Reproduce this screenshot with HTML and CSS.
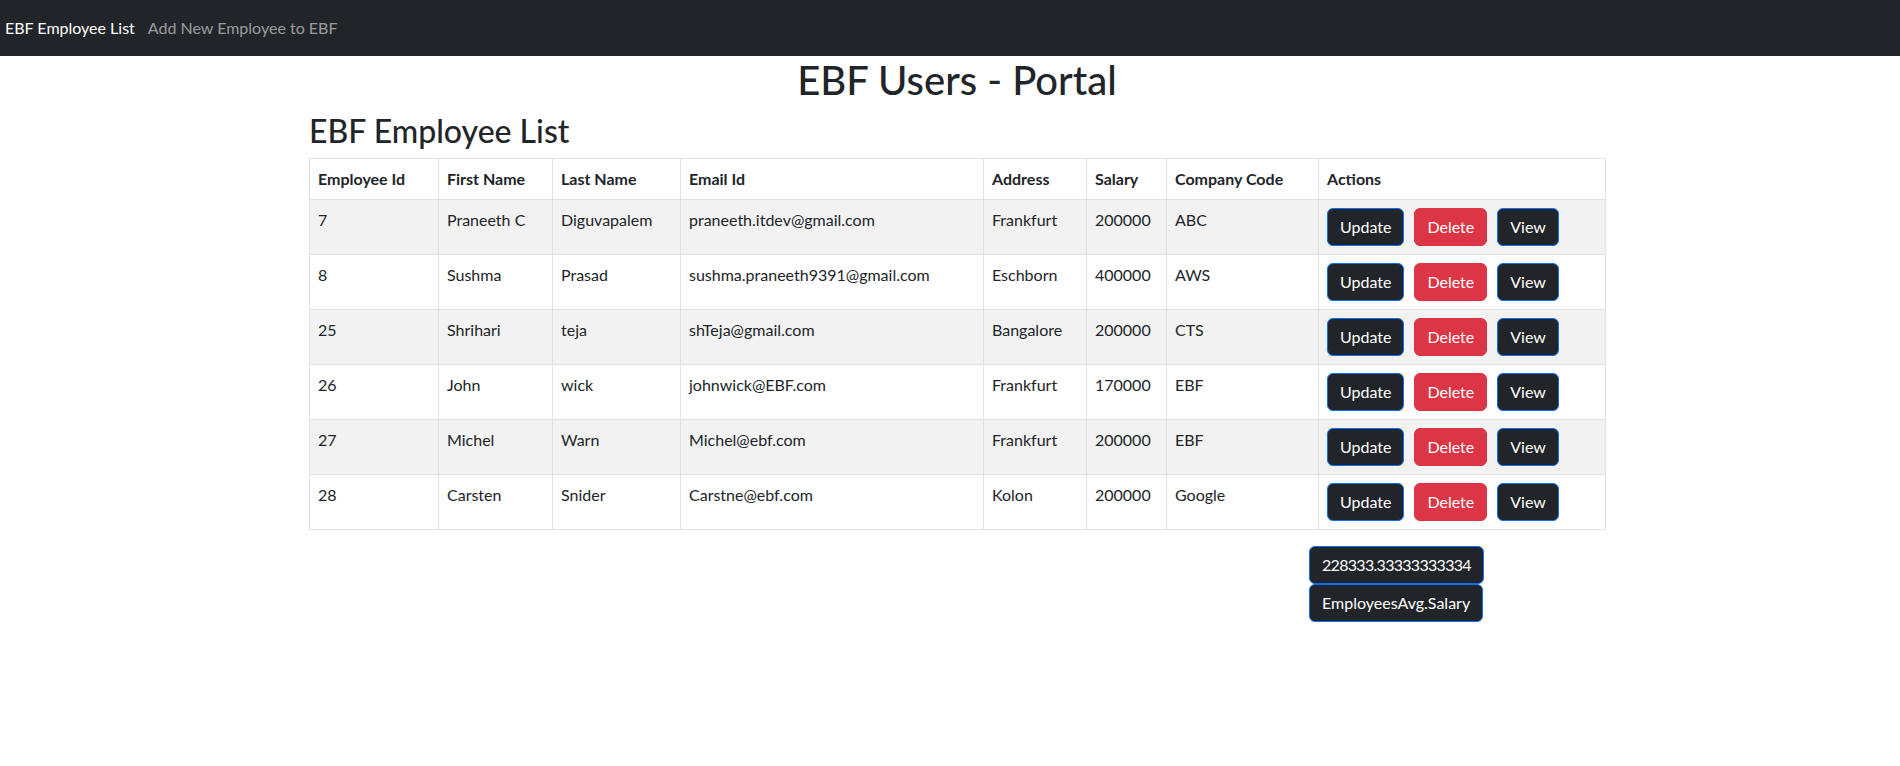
FILE: index.html
```html
<!DOCTYPE html>
<html lang="en">
<head>
<meta charset="utf-8">
<title>EBF Users - Portal</title>
<link rel="stylesheet" href="styles.css">
</head>
<body>
<nav class="navbar">
  <a class="nav-link brand" href="#">EBF Employee List</a>
  <a class="nav-link muted" href="#">Add New Employee to EBF</a>
</nav>
<main class="container">
  <h1 class="page-title">EBF Users - Portal</h1>
  <h2 class="list-title">EBF Employee List</h2>
  <table class="emp-table">
    <colgroup>
      <col class="w-id"><col class="w-first"><col class="w-last"><col class="w-email">
      <col class="w-addr"><col class="w-sal"><col class="w-code"><col class="w-act">
    </colgroup>
    <thead>
      <tr><th>Employee Id</th><th>First Name</th><th>Last Name</th><th>Email Id</th><th>Address</th><th>Salary</th><th>Company Code</th><th>Actions</th></tr>
    </thead>
    <tbody>
      <tr><td>7</td><td>Praneeth C</td><td>Diguvapalem</td><td>praneeth.itdev@gmail.com</td><td>Frankfurt</td><td>200000</td><td>ABC</td>
        <td><button class="btn btn-dark">Update</button><button class="btn btn-danger">Delete</button><button class="btn btn-dark">View</button></td></tr>
      <tr><td>8</td><td>Sushma</td><td>Prasad</td><td>sushma.praneeth9391@gmail.com</td><td>Eschborn</td><td>400000</td><td>AWS</td>
        <td><button class="btn btn-dark">Update</button><button class="btn btn-danger">Delete</button><button class="btn btn-dark">View</button></td></tr>
      <tr><td>25</td><td>Shrihari</td><td>teja</td><td>shTeja@gmail.com</td><td>Bangalore</td><td>200000</td><td>CTS</td>
        <td><button class="btn btn-dark">Update</button><button class="btn btn-danger">Delete</button><button class="btn btn-dark">View</button></td></tr>
      <tr><td>26</td><td>John</td><td>wick</td><td>johnwick@EBF.com</td><td>Frankfurt</td><td>170000</td><td>EBF</td>
        <td><button class="btn btn-dark">Update</button><button class="btn btn-danger">Delete</button><button class="btn btn-dark">View</button></td></tr>
      <tr><td>27</td><td>Michel</td><td>Warn</td><td>Michel@ebf.com</td><td>Frankfurt</td><td>200000</td><td>EBF</td>
        <td><button class="btn btn-dark">Update</button><button class="btn btn-danger">Delete</button><button class="btn btn-dark">View</button></td></tr>
      <tr><td>28</td><td>Carsten</td><td>Snider</td><td>Carstne@ebf.com</td><td>Kolon</td><td>200000</td><td>Google</td>
        <td><button class="btn btn-dark">Update</button><button class="btn btn-danger">Delete</button><button class="btn btn-dark">View</button></td></tr>
    </tbody>
  </table>
  <div class="avg-box">
    <button class="btn btn-dark btn-num">228333.33333333334</button>
    <button class="btn btn-dark">EmployeesAvg.Salary</button>
  </div>
</main>
</body>
</html>
```
FILE: styles.css
```css
* { box-sizing: border-box; }
html, body {
  margin: 0;
  padding: 0;
  background: #fff;
  color: #212529;
  font-family: Lato, "Open Sans", "Noto Sans", sans-serif;
  font-size: 16px;
  line-height: 1.5;
}
.navbar {
  display: flex;
  align-items: center;
  height: 56px;
  background: #212529;
  padding: 0 0 0 5px;
}
.nav-link {
  text-decoration: none;
  font-size: 16px;
  line-height: 24px;
  padding: 16px 8px 16px 0;
}
.nav-link + .nav-link { padding-left: 5px; }
.brand { color: #ffffff; }
.muted { color: rgba(255, 255, 255, 0.55); }

.container {
  width: 1296px;
  margin-left: 309px;
}
.page-title {
  margin: 0 0 8px;
  font-size: 40px;
  font-weight: 500;
  line-height: 48px;
  text-align: center;
}
.list-title {
  margin: 0 0 8px;
  font-size: 32px;
  font-weight: 500;
  line-height: 38.4px;
}
.emp-table {
  width: 1296px;
  table-layout: fixed;
  border-collapse: collapse;
  margin-bottom: 16px;
  vertical-align: top;
}
.w-id { width: 129px; }
.w-first { width: 114px; }
.w-last { width: 128px; }
.w-email { width: 303px; }
.w-addr { width: 103px; }
.w-sal { width: 80px; }
.w-code { width: 152px; }
.w-act { width: 287px; }
.emp-table th, .emp-table td {
  border: 1px solid #dee2e6;
  padding: 8px;
  text-align: left;
  vertical-align: top;
  white-space: nowrap;
}
.emp-table th { font-weight: 700; }
.emp-table tbody tr:nth-child(odd) td { background: #f2f2f2; }

.btn {
  display: inline-block;
  font-family: inherit;
  font-size: 16px;
  line-height: 24px;
  padding: 6px 12px;
  border-radius: 6px;
  border: 1px solid #0d6efd;
  color: #fff;
  cursor: pointer;
}
.btn + .btn { margin-left: 10px; }
.btn-dark { background: #212529; }
.btn-danger { background: #dc3545; border-color: #dc3545; }

.avg-box {
  display: flex;
  flex-direction: column;
  align-items: flex-start;
  padding-left: 1000px;
}
.avg-box .btn + .btn { margin-left: 0; }
.btn-num { letter-spacing: -0.7px; }
```
